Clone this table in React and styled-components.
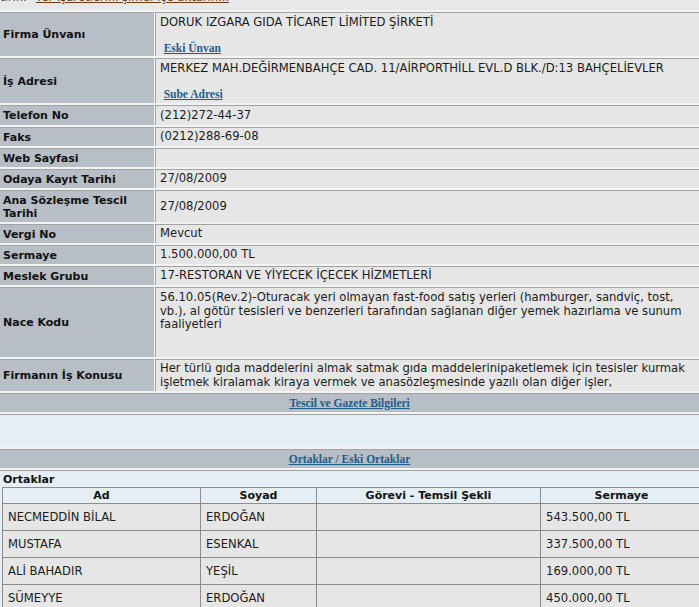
import React from 'react'
import styled, { createGlobalStyle } from 'styled-components'

const GlobalStyle = createGlobalStyle`
  html, body {
    margin: 0;
    padding: 0;
    overflow: hidden;
  }
  body {
    background: #f3f3f3;
    font-family: "DejaVu Sans", Verdana, sans-serif;
    font-size: 11.6px;
    color: #1b1b1b;
  }
`

const rows = [
  { label: 'Firma Ünvanı', lines: ['DORUK IZGARA GIDA TİCARET LİMİTED ŞİRKETİ'], link: 'Eski Ünvan', h: 43 },
  {
    label: 'İş Adresi',
    lines: ['MERKEZ MAH.DEĞİRMENBAHÇE CAD. 11/AİRPORTHİLL EVL.D BLK./D:13 BAHÇELİEVLER'],
    link: 'Sube Adresi',
    h: 44,
  },
  { label: 'Telefon No', lines: ['(212)272-44-37'], h: 19 },
  { label: 'Faks', lines: ['(0212)288-69-08'], h: 18 },
  { label: 'Web Sayfasi', lines: [], h: 18 },
  { label: 'Odaya Kayıt Tarihi', lines: ['27/08/2009'], h: 18 },
  { label: ['Ana Sözleşme Tescil', 'Tarihi'], lines: ['27/08/2009'], h: 31 },
  { label: 'Vergi No', lines: ['Mevcut'], h: 18 },
  { label: 'Sermaye', lines: ['1.500.000,00 TL'], h: 18 },
  { label: 'Meslek Grubu', lines: ['17-RESTORAN VE YİYECEK İÇECEK HİZMETLERİ'], h: 18 },
  {
    label: 'Nace Kodu',
    lines: [
      '56.10.05(Rev.2)-Oturacak yeri olmayan fast-food satış yerleri (hamburger, sandviç, tost,',
      'vb.), al götür tesisleri ve benzerleri tarafından sağlanan diğer yemek hazırlama ve sunum',
      'faaliyetleri',
    ],
    h: 69,
    top: true,
  },
  {
    label: 'Firmanın İş Konusu',
    lines: [
      'Her türlü gıda maddelerini almak satmak gıda maddelerinipaketlemek için tesisler kurmak',
      'işletmek kiralamak kiraya vermek ve anasözleşmesinde yazılı olan diğer işler,',
    ],
    h: 31,
  },
]

const partners = [
  { ad: 'NECMEDDİN BİLAL', soyad: 'ERDOĞAN', gorev: '', sermaye: '543.500,00 TL' },
  { ad: 'MUSTAFA', soyad: 'ESENKAL', gorev: '', sermaye: '337.500,00 TL' },
  { ad: 'ALİ BAHADIR', soyad: 'YEŞİL', gorev: '', sermaye: '169.000,00 TL' },
  { ad: 'SÜMEYYE', soyad: 'ERDOĞAN', gorev: '', sermaye: '450.000,00 TL' },
]

const App = () => {
  return (
    <Page>
      <GlobalStyle />
      <Notice>
        <NoticeText>
          tırın.<NoticeLink>Yer işaretlerini şimdi içe aktarın...</NoticeLink>
        </NoticeText>
      </Notice>

      {rows.map((row, i) => (
        <InfoRow key={i} $h={row.h}>
          <Label>
            <div>
              {Array.isArray(row.label)
                ? row.label.map((l, j) => <div key={j}>{l}</div>)
                : row.label}
            </div>
          </Label>
          <Value $top={row.top || row.link}>
            {row.lines.map((l, j) => (
              <Line key={j}>{l}</Line>
            ))}
            {row.link && (
              <LinkLine>
                {'\u00a0'}
                <SerifLink href="#">{row.link} </SerifLink>
              </LinkLine>
            )}
          </Value>
        </InfoRow>
      ))}

      <SectionBar>
        <SerifLink href="#">Tescil ve Gazete Bilgileri</SerifLink>
      </SectionBar>
      <BlueBlock />
      <SectionBar>
        <SerifLink href="#">Ortaklar / Eski Ortaklar</SerifLink>
      </SectionBar>

      <PartnerPanel>
        <PanelTitle>Ortaklar</PanelTitle>
        <PartnerTable>
          <colgroup>
            <col style={{ width: 198 }} />
            <col style={{ width: 116 }} />
            <col style={{ width: 224 }} />
            <col style={{ width: 162 }} />
          </colgroup>
          <thead>
            <tr>
              <HeadCell>Ad</HeadCell>
              <HeadCell>Soyad</HeadCell>
              <HeadCell>Görevi - Temsil Şekli</HeadCell>
              <HeadCell>Sermaye</HeadCell>
            </tr>
          </thead>
          <tbody>
            {partners.map((p, i) => (
              <tr key={i}>
                <Cell>{p.ad}</Cell>
                <Cell>{p.soyad}</Cell>
                <Cell>{p.gorev}</Cell>
                <Cell>{p.sermaye}</Cell>
              </tr>
            ))}
          </tbody>
        </PartnerTable>
      </PartnerPanel>
    </Page>
  )
}

const Page = styled.div`
  display: flex;
  flex-direction: column;
  gap: 2px;
  width: 100%;
  min-height: 607px;
  background: #f3f3f3;
`

const Notice = styled.div`
  height: 10px;
  overflow: hidden;
  background: #e8e8e8;
`

const NoticeText = styled.div`
  margin-top: -9px;
  line-height: 13px;
  white-space: nowrap;
  color: #4a4a4a;
`

const NoticeLink = styled.span`
  margin-left: 9px;
  color: #6b3a14;
  text-decoration: underline;
`

const InfoRow = styled.div`
  display: flex;
  column-gap: 1px;
  height: ${(props) => props.$h + 1}px;
`

const Label = styled.div`
  box-sizing: border-box;
  flex: none;
  width: 154px;
  display: flex;
  align-items: center;
  padding: 0 3px;
  border-top: 1px solid #a3a3a3;
  background: #b8bec6;
  font-size: 11px;
  font-weight: bold;
  line-height: 13px;
  color: #111;
`

const Value = styled.div`
  box-sizing: border-box;
  flex: 1;
  display: flex;
  flex-direction: column;
  justify-content: ${(props) => (props.$top ? 'flex-start' : 'center')};
  padding: ${(props) => (props.$top ? '3px 4px 2px' : '2px 4px')};
  border-top: 1px solid #a3a3a3;
  border-left: 1px solid #a3a3a3;
  background: #e6e6e6;
  line-height: 13.5px;
  overflow: hidden;
`

const Line = styled.div`
  white-space: nowrap;
`

const LinkLine = styled.div`
  margin-top: 12px;
  line-height: 13.5px;
  white-space: nowrap;
`

const SerifLink = styled.a`
  font-family: "Liberation Serif", "Times New Roman", serif;
  font-size: 11.5px;
  font-weight: bold;
  color: #1d5d8c;
  text-decoration: underline;
`

const SectionBar = styled.div`
  height: 18px;
  border-top: 1px solid #a3a3a3;
  background: #b8bec6;
  text-align: center;
  line-height: 18px;
`

const BlueBlock = styled.div`
  height: 32px;
  border-top: 1px solid #a3a3a3;
  background: #e4eef4;
`

const PartnerPanel = styled.div`
  flex: 1;
  border-top: 1px solid #a3a3a3;
  background: #e4eef4;
`

const PanelTitle = styled.div`
  height: 16px;
  padding-left: 3px;
  font-size: 11px;
  line-height: 17px;
  font-weight: bold;
  color: #111;
`

const PartnerTable = styled.table`
  margin-left: 2px;
  width: 700px;
  table-layout: fixed;
  border-collapse: collapse;
  border: 1px solid #8c8c8c;
`

const HeadCell = styled.th`
  height: 15px;
  padding: 0;
  border: 1px solid #8c8c8c;
  font-size: 11px;
  font-weight: bold;
  text-align: center;
  line-height: 15px;
  color: #111;
`

const Cell = styled.td`
  height: 26px;
  padding: 0 5px;
  border: 1px solid #8c8c8c;
  background: #e6e6e6;
  line-height: 14px;
  white-space: nowrap;
`

export default App
